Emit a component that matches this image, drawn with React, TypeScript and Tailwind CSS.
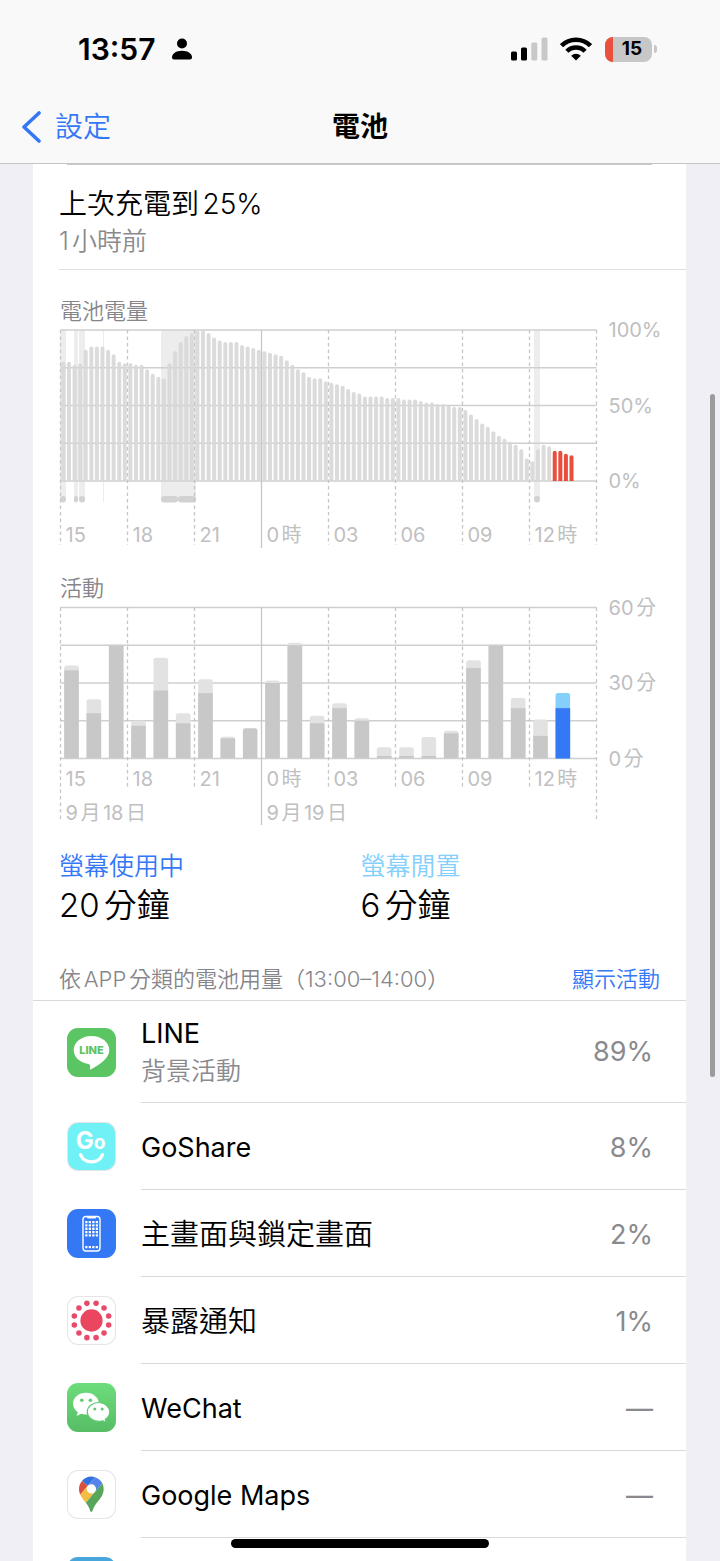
import React from 'react';

const batteryLevels = [
  79, 79, 77, 78, 87, 89, 89, 89, 87, 84, 79, 78, 78, 77, 77, 74, 71, 69, 68, 78, 86, 92, 96, 98,
  100, 100, 98, 95, 93, 92, 92, 92, 90, 89, 88, 87, 86, 85, 84, 83, 80, 77, 74, 72, 69, 68, 68, 66,
  65, 64, 63, 61, 59, 58, 56, 56, 56, 56, 55, 55, 55, 54, 54, 54, 53, 52, 52, 51, 51, 50, 49, 49,
  47, 44, 41, 38, 36, 33, 30, 28, 26, 24, 21, 15, 13, 21, 24, 23, 20, 20, 18, 17,
];

// Index of the first quarter hour in low battery
const LOW_FROM = 88;

// [x, width] of each stretch on the charger
const chargingBands = [
  [27, 6],
  [41, 4],
  [46, 6],
  [128, 17],
  [145, 18],
  [501, 6],
];

// [total minutes, minutes with screen on]
const activity = [
  [37, 35], [23.5, 18], [45.5, 45], [15, 13], [40, 27], [18, 14], [31.5, 26], [8.6, 8], [12, 12],
  [31, 30], [46, 45], [17, 14], [22, 20], [16, 15], [4.5, 1], [4.5, 1], [8.5, 1], [11, 10],
  [39, 36], [45.5, 45], [24, 20], [15.5, 9], [26, 20],
];

const hours = ['15', '18', '21', '0時', '03', '06', '09', '12時'];

const LEFT = 27.5;
const RIGHT = 563.5;
const HOUR = (RIGHT - LEFT) / 24;
const PLOT_H = 151;

interface ChartFrameProps {
  top: number;
  labelY: number;
  bottom: number;
  edgeBottom: number;
  yLabels: string[];
}

function ChartFrame({ top, labelY, bottom, edgeBottom, yLabels }: ChartFrameProps) {
  return (
    <g>
      {[0, 1, 2, 3, 4].map((i) => (
        <line key={i} x1={LEFT} x2={RIGHT} y1={top + (i * PLOT_H) / 4} y2={top + (i * PLOT_H) / 4} stroke="#cfcfcf" strokeWidth="1.4" />
      ))}
      {Array.from({ length: 9 }, (_, i) => {
        const x = LEFT + i * 3 * HOUR;
        const end = i === 3 ? edgeBottom + 3 : i === 0 || i === 8 ? edgeBottom : bottom;
        return (
          <line key={i} x1={x} x2={x} y1={top} y2={end} stroke="#c6c6c6" strokeWidth="1.3" strokeDasharray={i === 3 ? undefined : '3.5 3'} />
        );
      })}
      {hours.map((hour, i) => (
        <text key={hour} x={LEFT + i * 3 * HOUR + 5} y={labelY} className="fill-[#c0c0c1] text-[20px]">
          {hour}
        </text>
      ))}
      {yLabels.map((label, i) => (
        <text key={label} x={RIGHT + 12} y={top + (i * PLOT_H) / 2 + 7} className="fill-[#c0c0c1] text-[20px]">
          {label}
        </text>
      ))}
    </g>
  );
}

function BatteryChart() {
  const top = 2;
  const base = top + PLOT_H;
  return (
    <svg viewBox="0 0 653 222" className="block w-full h-auto overflow-visible font-normal" role="img" aria-label="電池電量">
      {chargingBands.map(([x, w]) => (
        <g key={x}>
          <rect x={x} y={top} width={w} height="169" fill="#ededed" />
          <rect x={x} y="168" width={w} height="6.5" rx="3" fill="#d2d2d2" />
        </g>
      ))}
      <rect x="70" y={top} width="1" height="172" fill="#ececec" />
      <ChartFrame top={top} labelY={214} bottom={217} edgeBottom={217} yLabels={['100%', '50%', '0%']} />
      {batteryLevels.map((level, i) => {
        const x = LEFT + 0.9 + (i * HOUR) / 4;
        const y = base - (level / 100) * PLOT_H;
        return (
          <path
            key={i}
            d={`M${x} ${base}V${y + 2}a2 2 0 0 1 4 0V${base}z`}
            fill={i >= LOW_FROM ? '#e94d3b' : '#d8d8d8'}
            fillOpacity={i >= LOW_FROM ? 1 : 0.92}
          />
        );
      })}
    </svg>
  );
}

function ActivityChart() {
  const top = 2.5;
  const base = top + PLOT_H;
  const scale = PLOT_H / 60;
  return (
    <svg viewBox="0 0 653 222" className="block w-full h-auto overflow-visible font-normal" role="img" aria-label="活動">
      <ChartFrame top={top} labelY={181} bottom={184} edgeBottom={217} yLabels={['60分', '30分', '0分']} />
      {activity.map(([total, active], i) => {
        const x = LEFT + 3.7 + i * HOUR;
        const y = base - total * scale;
        const current = i === activity.length - 1;
        return (
          <g key={i}>
            <path
              d={`M${x} ${base}V${y + 2.5}q0 -2.5 2.5 -2.5h9.6q2.5 0 2.5 2.5V${base}z`}
              fill={current ? '#84cffb' : total === active ? '#c8c8c8' : '#e2e2e2'}
            />
            {total !== active && (
              <rect x={x} y={base - active * scale} width="14.6" height={active * scale} fill={current ? '#3478f6' : '#c8c8c8'} />
            )}
          </g>
        );
      })}
      <text x={LEFT + 5} y="215" className="fill-[#c0c0c1] text-[20px]">9月18日</text>
      <text x={LEFT + 9 * HOUR + 5} y="215" className="fill-[#c0c0c1] text-[20px]">9月19日</text>
    </svg>
  );
}

const LineIcon = () => (
  <svg viewBox="0 0 49 49" className="w-full h-full bg-[#5bc463]">
    <path d="M24.5 8C14.6 8 6.7 14.2 6.7 22.1c0 7 6.2 12.7 14.6 13.9 2 .4 2.1 1.3 1.7 3.4-.3 2-.2 2.7 1.6 1.7C31 37.5 42.3 31 42.3 22.1 42.3 14.2 34.4 8 24.5 8z" fill="#fff" />
    <text x="24.5" y="26" textAnchor="middle" className="fill-[#5bc463] text-[11px] font-extrabold">LINE</text>
  </svg>
);

const GoShareIcon = () => (
  <svg viewBox="0 0 49 49" className="w-full h-full bg-[#70f1f6]">
    <text x="8" y="27" className="fill-white font-bold">
      <tspan className="text-[25px]">G</tspan>
      <tspan className="text-[20px]">o</tspan>
    </text>
    <path d="M13 33c4 10 19 10 23 0" fill="none" stroke="#fff" strokeWidth="3.4" strokeLinecap="round" />
  </svg>
);

const HomeScreenIcon = () => (
  <svg viewBox="0 0 49 49" className="w-full h-full bg-[#3478f6]">
    <rect x="16" y="7.5" width="17" height="34.5" rx="3" fill="none" stroke="#fff" strokeWidth="1.4" />
    <path d="M20 7.5h9v1q0 1-1 1h-7q-1 0-1-1z" fill="#fff" />
    {[12, 15.3, 18.6, 21.9, 25.2, 37].map((y) =>
      [18.2, 21.7, 25.2, 28.7].map((x) => <rect key={`${x}-${y}`} x={x} y={y} width="2.3" height="2.3" rx=".5" fill="#fff" />)
    )}
  </svg>
);

const ExposureIcon = () => (
  <svg viewBox="0 0 49 49" className="w-full h-full bg-white">
    <circle cx="24.5" cy="24.5" r="11.6" fill="#ea4660" />
    {Array.from({ length: 12 }, (_, i) => {
      const angle = ((i * 30 + 15) * Math.PI) / 180;
      return <circle key={i} cx={24.5 + 18.5 * Math.sin(angle)} cy={24.5 - 18.5 * Math.cos(angle)} r="2.9" fill="#e84a6c" />;
    })}
  </svg>
);

const WeChatIcon = () => (
  <svg viewBox="0 0 49 49" className="w-full h-full bg-linear-to-b from-[#6cdd7b] to-[#57bd66]">
    <path d="M19 9.8c-7.3 0-13 4.8-13 10.9 0 3.5 1.9 6.5 4.8 8.5l-1.1 3.8 4.4-2.2c1.5.5 3.2.8 4.9.8 7.2 0 12.9-4.8 12.9-10.9S26.2 9.8 19 9.8z" fill="#fff" />
    <path d="M31.5 19.5c-6.2 0-11.2 4.2-11.2 9.4s5 9.4 11.2 9.4c1.4 0 2.8-.2 4-.6l3.7 1.9-.9-3.3c2.7-1.7 4.4-4.4 4.4-7.4 0-5.2-5-9.4-11.2-9.4z" fill="#fff" stroke="#61ca70" strokeWidth="1.2" />
    <circle cx="14.8" cy="17.2" r="1.8" fill="#61cc70" />
    <circle cx="23.4" cy="17.2" r="1.8" fill="#61cc70" />
    <circle cx="27.8" cy="26" r="1.5" fill="#61c870" />
    <circle cx="35.2" cy="26" r="1.5" fill="#61c870" />
  </svg>
);

const GoogleMapsIcon = () => (
  <svg viewBox="0 0 49 49" className="w-full h-full bg-white">
    <g transform="translate(11.5 5.8) scale(.278)">
      <path fill="#3270df" d="M60.2 2.2C55.8.8 51 0 46.1 0 32 0 19.3 6.4 10.8 16.5l21.8 18.3L60.2 2.2z" />
      <path fill="#d95040" d="M10.8 16.5C4.1 24.5 0 34.9 0 46.1c0 8.7 1.7 15.7 4.6 22l28-33.3-21.8-18.3z" />
      <path fill="#5383ec" d="M46.2 28.5c9.8 0 17.7 7.9 17.7 17.7 0 4.3-1.6 8.3-4.2 11.4 0 0 13.9-16.6 27.5-32.7-5.6-10.8-15.3-19-27-22.7L32.6 34.8c3.3-3.8 8.1-6.3 13.6-6.3" />
      <path fill="#f2be42" d="M46.2 63.8c-9.8 0-17.7-7.9-17.7-17.7 0-4.3 1.5-8.3 4.1-11.3l-28 33.3c4.8 10.6 12.8 19.2 21 29.9l34.1-40.5c-3.3 3.9-8.1 6.3-13.5 6.3" />
      <path fill="#58a55c" d="M59.1 109.2c15.4-24.1 33.3-35 33.3-63 0-7.7-1.9-14.9-5.2-21.3L25.6 98c2.6 3.4 5.3 7.3 7.9 11.3 9.4 14.5 6.8 23.1 12.8 23.1s3.4-8.7 12.8-23.2" />
    </g>
  </svg>
);

const SkyIcon = () => <svg viewBox="0 0 49 49" className="w-full h-full bg-[#48a6dc]" />;

const apps = [
  { name: 'LINE', note: '背景活動', usage: '89%', icon: LineIcon, latin: true, outlined: false },
  { name: 'GoShare', usage: '8%', icon: GoShareIcon, latin: true, outlined: true },
  { name: '主畫面與鎖定畫面', usage: '2%', icon: HomeScreenIcon, latin: false, outlined: false },
  { name: '暴露通知', usage: '1%', icon: ExposureIcon, latin: false, outlined: true },
  { name: 'WeChat', usage: '—', icon: WeChatIcon, latin: true, outlined: false },
  { name: 'Google Maps', usage: '—', icon: GoogleMapsIcon, latin: true, outlined: true },
  { name: '', usage: '', icon: SkyIcon, latin: true, outlined: false },
];

function StatusBar() {
  return (
    <div className="flex h-[98px] items-center justify-between pl-[78px] pr-[63px]">
      <div className="flex items-center gap-4">
        <span className="text-[30px] leading-8 font-semibold">13:57</span>
        <svg viewBox="0 0 20 22" className="w-5 h-[22px]">
          <circle cx="10" cy="5.5" r="5" />
          <path d="M0 19.5C0 15.5 4 12.7 10 12.7s10 2.8 10 6.8q0 2-2 2H2q-2 0-2-2z" />
        </svg>
      </div>
      <div className="flex items-center">
        <svg viewBox="0 0 37 24" className="w-[37px] h-6">
          <rect x="0" y="14.5" width="6" height="9" rx="1.5" />
          <rect x="10" y="10.5" width="6" height="13" rx="1.5" />
          <rect x="20.3" y="5.5" width="6" height="18" rx="1.5" fill="#c8c8c8" />
          <rect x="30.5" y=".5" width="6" height="23" rx="1.5" fill="#c8c8c8" />
        </svg>
        <svg viewBox="0 0 32 24" className="ml-3 w-8 h-6" fill="none" stroke="#000">
          <path d="M1.5 8.7a20.5 20.5 0 0 1 29 0" strokeWidth="4.6" />
          <path d="M6.9 14.2a12.9 12.9 0 0 1 18.2 0" strokeWidth="4.4" />
          <path d="M16 23.5l-4.8-4.8a6.8 6.8 0 0 1 9.6 0z" fill="#000" stroke="none" />
        </svg>
        <div className="ml-[13px] flex h-[25px] w-[47px] items-center overflow-hidden rounded-lg bg-[#c7c7c7]">
          <span className="h-full w-2 bg-[#eb4f3d]" />
          <span className="flex-1 pr-px text-center text-[19px] leading-6 font-bold">15</span>
        </div>
        <span className="ml-[2px] h-2 w-[3px] rounded-r-full bg-[#c7c7c7]" />
      </div>
    </div>
  );
}

export default function App() {
  return (
    <div className="relative flex h-screen flex-col overflow-hidden bg-[#f0eff5] font-[Inter,'Noto_Sans_CJK_TC',sans-serif] font-[350] text-black [text-autospace:normal]">
      <header className="shrink-0 border-b border-[#c5c5c7] bg-[#f9f9f9]">
        <StatusBar />
        <nav className="grid h-[65px] grid-cols-3 items-start px-[21px] pt-2">
          <a href="#settings" className="flex items-center gap-[14px] text-[28px] leading-[42px] text-[#3478f6]">
            <svg viewBox="0 0 20 32" className="w-5 h-8" fill="none" stroke="currentColor" strokeWidth="3.6" strokeLinecap="round" strokeLinejoin="round">
              <path d="M18 2L3 16l15 14" />
            </svg>
            設定
          </a>
          <h1 className="text-center text-[28px] leading-[42px] font-bold">電池</h1>
        </nav>
      </header>

      <main className="ml-[33px] mr-[34px] flex-1 overflow-hidden bg-white">
        <div className="mx-[34px] h-px bg-[#c9c9cb]" />
        <section className="ml-[26px] flex h-[105px] flex-col justify-center border-b border-[#e0e0e2] pt-[10px]">
          <p className="text-[28px] leading-[38px]">上次充電到25%</p>
          <p className="text-[25px] leading-9 text-[#8a8a8e]">1小時前</p>
        </section>

        <section className="pt-6">
          <h2 className="pl-[27px] text-[22px] leading-[34px] text-[#85858a]">電池電量</h2>
          <BatteryChart />
        </section>
        <section className="pt-[21px]">
          <h2 className="pl-[27px] text-[22px] leading-[34px] text-[#85858a]">活動</h2>
          <ActivityChart />
        </section>

        <dl className="grid grid-cols-2 pl-[26px] pt-[21px]">
          <div>
            <dt className="text-[25px] leading-9 text-[#3478f6]">螢幕使用中</dt>
            <dd className="text-[33px] leading-[42px]">20分鐘</dd>
          </div>
          <div className="-ml-3">
            <dt className="text-[25px] leading-9 text-[#84cffb]">螢幕閒置</dt>
            <dd className="text-[33px] leading-[42px]">6分鐘</dd>
          </div>
        </dl>

        <div className="mt-9 flex items-center justify-between border-b border-[#d9d9db] pr-[26px] pb-1 pl-[26px] text-[22px] leading-[34px]">
          <h2 className="text-[#85858a]">依APP分類的電池用量（13:00–14:00）</h2>
          <button type="button" className="text-[#3478f6]">顯示活動</button>
        </div>

        <ul>
          {apps.map((app) => (
            <li key={app.name} className="flex items-center pl-[34px]">
              <div className={`h-[49px] w-[49px] shrink-0 overflow-hidden rounded-[11px] ${app.outlined ? 'bg-black/10 p-px [&>svg]:rounded-[10px]' : ''}`}>
                <app.icon />
              </div>
              <div className={`ml-[25px] flex flex-1 items-center justify-between border-b border-[#d9d9db] pr-[33px] ${app.note ? 'h-[102px]' : 'h-[87px] pt-[3px]'}`}>
                <div>
                  <p className={`leading-[38px] ${app.latin ? 'text-[27px] font-normal' : 'text-[29px]'}`}>{app.name}</p>
                  {app.note && <p className="text-[25px] leading-9 text-[#8a8a8e]">{app.note}</p>}
                </div>
                <span className="text-[27px] leading-[38px] font-normal text-[#8a8a8e]">{app.usage}</span>
              </div>
            </li>
          ))}
        </ul>
      </main>

      {/* scroll thumb and home indicator float over the page */}
      <div className="absolute top-[394px] right-[5px] h-[683px] w-[5px] rounded-full bg-[#9b9b9d]" />
      <div className="absolute bottom-[13px] left-1/2 h-[9px] w-[258px] -translate-x-1/2 rounded-full bg-black" />
    </div>
  );
}
